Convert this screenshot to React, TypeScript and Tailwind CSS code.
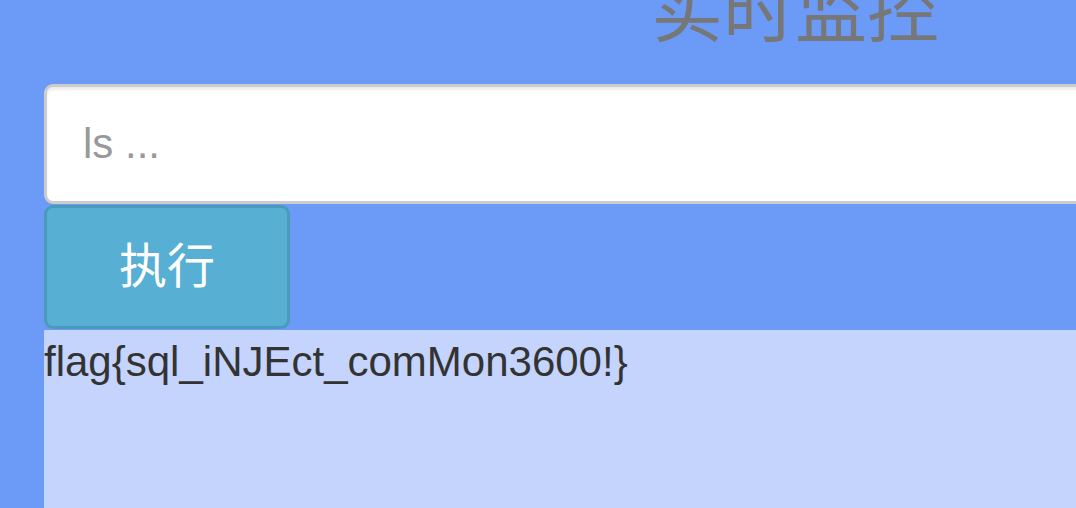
import React from "react"

const App = () => {
  return (
    <div
      className="h-[508px] w-[1076px] overflow-hidden bg-[#6c9bf7]"
      style={{ fontFamily: '"Liberation Sans", "Noto Sans CJK SC", sans-serif' }}
    >
      <div className="ml-[44px] w-[1502px]">
        <div className="flex h-[84px] items-end justify-center">
          <h1 className="mb-[37px] text-[72px] font-normal leading-[1] text-[#777777]">
            实时监控
          </h1>
        </div>

        <input
          type="text"
          placeholder="ls ..."
          className="block h-[120px] w-full rounded-[9px] border-[3px] border-[#cccccc] bg-white px-[36px] text-[42px] text-[#555555] shadow-[inset_0_3px_3px_rgba(0,0,0,0.075)] outline-none placeholder:text-[#999999]"
        />

        <button className="mt-[1px] block h-[124px] w-[246px] rounded-[9px] border-[3px] border-[#4a9bb9] bg-[#57afd3] text-[48px] text-white">
          执行
        </button>

        <div className="mt-[1px] h-[200px] bg-[#c5d4fc] pt-[2px] text-[42px] leading-[60px] text-[#333333]">
          flag{"{"}sql_iNJEct_comMon3600!{"}"}
        </div>
      </div>
    </div>
  )
}

export default App
